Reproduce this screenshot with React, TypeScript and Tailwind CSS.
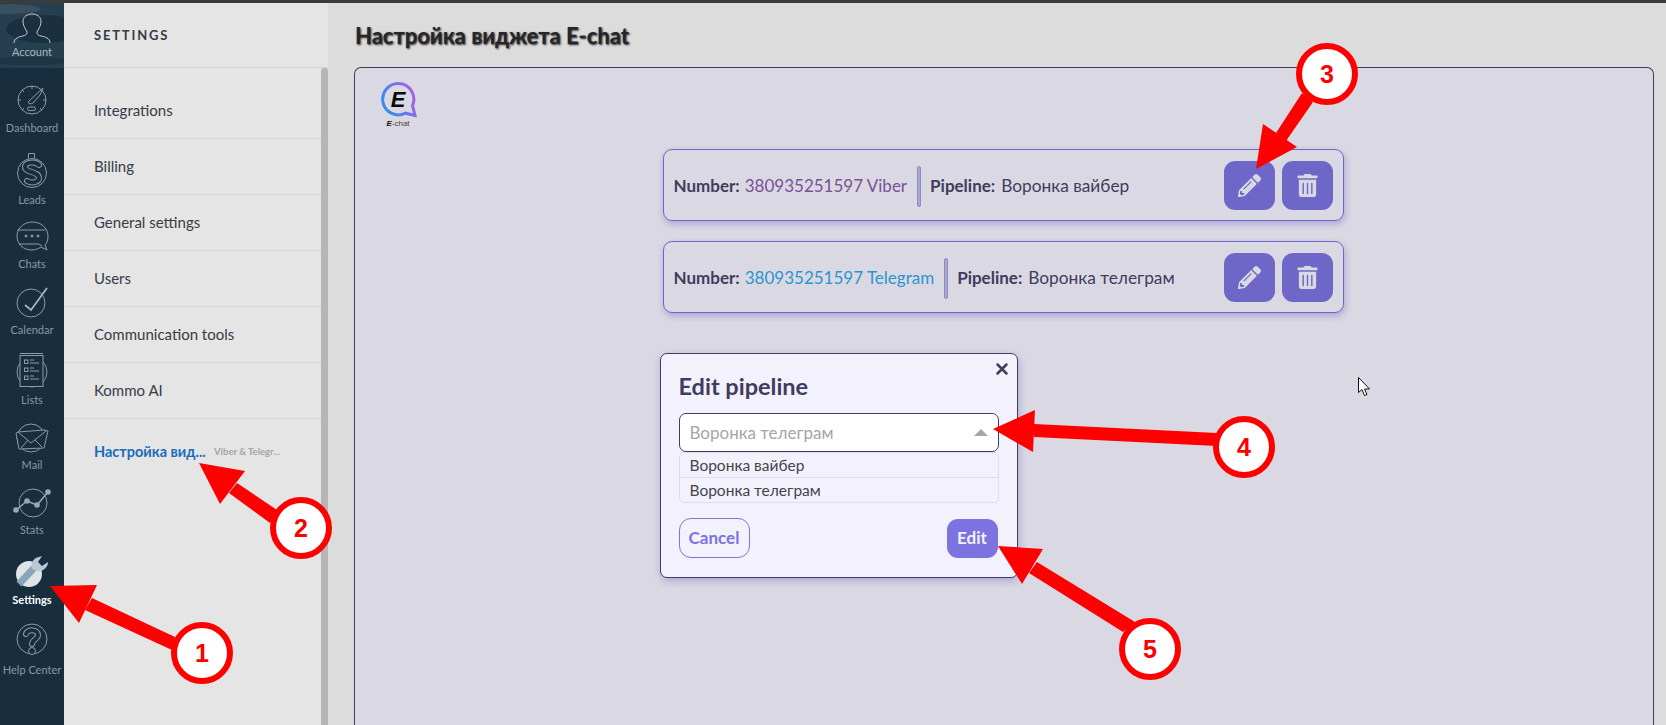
import { FaPencilAlt, FaTrashAlt } from "react-icons/fa";

function Hollow({ d }: { d: string }) {
  return (
    <>
      <path d={d} fill="none" stroke="#8d9ba5" strokeWidth="6" strokeLinecap="round" strokeLinejoin="round" />
      <path d={d} fill="none" stroke="#182d3e" strokeWidth="4" strokeLinecap="round" strokeLinejoin="round" />
    </>
  );
}

function Icon({ children }: { children: React.ReactNode }) {
  return (
    <svg width="44" height="40" viewBox="0 0 44 40" fill="none" stroke="#8d9ba5" strokeWidth="1">
      {children}
    </svg>
  );
}

const navItems = [
  {
    label: "Dashboard",
    height: "h-[68px]",
    icon: (
      <Icon>
        <circle cx="22" cy="20" r="14" />
        <path d="M22 6v3M8 20h3M33 20h3M12 30l2-2M32 30l-2-2M12 10l2 2" />
        <path d="M19 21l14-13-3 7-7 8c-3 2-6 0-4-2z" />
        <rect x="17.500" y="27" width="8" height="3.500" rx="1.700" />
      </Icon>
    ),
  },
  {
    label: "Leads",
    height: "h-[72px]",
    icon: (
      <Icon>
        <path d="M18.500 6.500V1.500h6v5" />
        <circle cx="22" cy="21" r="14.500" />
        <Hollow d="M29 13c-4-4-14-3-14 2 0 6 14 4 14 11 0 4-7 6-12 3" />
      </Icon>
    ),
  },
  {
    label: "Chats",
    height: "h-[64px]",
    icon: (
      <Icon>
        <path d="M31 31c-3 2-6 3-9 3C13 34 7 28 7 20S14 6 22.500 6 38 12 38 20c0 4-1 7-3 9l2 5-6-3z" />
        <path d="M7.500 14h28M9 28h20l3 2" />
        <circle cx="16" cy="20" r="1" fill="#8d9ba5" />
        <circle cx="22" cy="20" r="1" fill="#8d9ba5" />
        <circle cx="28" cy="20" r="1" fill="#8d9ba5" />
      </Icon>
    ),
  },
  {
    label: "Calendar",
    height: "h-[66px]",
    icon: (
      <Icon>
        <circle cx="21" cy="21" r="14" />
        <path d="M15 23l6 5 16-22" strokeWidth="1.800" stroke="#a9b5bd" />
      </Icon>
    ),
  },
  {
    label: "Lists",
    height: "h-[70px]",
    icon: (
      <Icon>
        <circle cx="22" cy="20" r="15" />
        <path d="M10 1.500h23" />
        <rect x="10" y="3.500" width="23" height="31" fill="#182d3e" />
        <rect x="14.500" y="8" width="3.500" height="3.500" />
        <rect x="14.500" y="16" width="3.500" height="3.500" />
        <rect x="14.500" y="24" width="3.500" height="3.500" />
        <path d="M20 8h4M20 11h9M20 16h4M20 19h9M20 24h4M20 27h9" />
      </Icon>
    ),
  },
  {
    label: "Mail",
    height: "h-[65px]",
    icon: (
      <Icon>
        <circle cx="21" cy="21" r="14" />
        <path d="M8 15l26-2 4 1-4 17-25 1-3-16z" fill="#182d3e" />
        <path d="M8 15l13 11 15-12M11 31l7-8M32 30l-7-7" />
      </Icon>
    ),
  },
  {
    label: "Stats",
    height: "h-[65px]",
    icon: (
      <Icon>
        <circle cx="23" cy="21" r="14" />
        <path d="M6 28l11-9 10 4 11-13" stroke="#9aa7b0" strokeWidth="1.500" />
        <circle cx="6" cy="28" r="2.800" fill="#9aa7b0" stroke="none" />
        <circle cx="17" cy="19" r="2.800" fill="#9aa7b0" stroke="none" />
        <circle cx="27" cy="23" r="2.800" fill="#9aa7b0" stroke="none" />
        <circle cx="38" cy="10" r="2.800" fill="#9aa7b0" stroke="none" />
      </Icon>
    ),
  },
  {
    label: "Settings",
    height: "h-[70px]",
    active: true,
    icon: (
      <svg width="44" height="40" viewBox="0 0 44 40" fill="none">
        <circle cx="19" cy="22" r="13" fill="#dfe4e7" />
        <path d="M9 32l15-16" stroke="#8aa5b8" strokeWidth="7" />
        <path d="M22 17c-2-5 1-11 7-12l3-1-4 6 4 4 6-4c0 6-6 10-11 9z" fill="#b9c8d2" />
      </svg>
    ),
  },
  {
    label: "Help Center",
    height: "h-[70px]",
    icon: (
      <Icon>
        <circle cx="22" cy="17" r="15" />
        <Hollow d="M16 12c1-5 12-5 12 1 0 4-6 5-6 9" />
        <circle cx="22" cy="29" r="3.500" fill="#182d3e" />
      </Icon>
    ),
  },
];

const settingsRows = [
  { label: "Integrations", height: "h-[71px] pt-[15px]" },
  { label: "Billing", height: "h-[56px]" },
  { label: "General settings", height: "h-[56px]" },
  { label: "Users", height: "h-[56px]" },
  { label: "Communication tools", height: "h-[56px]" },
  { label: "Kommo AI", height: "h-[56px]" },
];

function Sidebar() {
  return (
    <div className="w-[64px] shrink-0 bg-[#182d3e] flex flex-col">
      <div className="h-[65px] relative overflow-hidden bg-[#263f50] flex flex-col items-center justify-end pb-[8px]">
        <svg className="absolute inset-0" width="64" height="65" viewBox="0 0 64 65">
          <ellipse cx="44" cy="26" rx="38" ry="14" fill="#1a3040" />
          <ellipse cx="10" cy="6" rx="30" ry="5" fill="#3a5060" />
          <ellipse cx="30" cy="58" rx="44" ry="4" fill="#1e3545" />
        </svg>
        <svg className="relative" width="44" height="32" viewBox="0 0 44 32" fill="none" stroke="#c5cdd2" strokeWidth="1">
          <path d="M4 31c0-5 5-6 9-7 4-1 5-3 3-6-2-3-3-6-3-9 0-4 4-7 9-7s9 3 9 7c0 3-1 6-3 9-2 3-1 5 3 6 4 1 9 2 9 7" />
        </svg>
        <span className="relative text-[11px] leading-[16px] text-[#aab6bd]">Account</span>
      </div>
      {navItems.map((item) => (
        <div key={item.label} className={`${item.height} flex flex-col items-center justify-end`}>
          {item.icon}
          <span className={item.active ? "text-[11px] leading-[16px] font-bold text-white" : "text-[11px] leading-[16px] text-[#8799a5] whitespace-nowrap"}>
            {item.label}
          </span>
        </div>
      ))}
    </div>
  );
}

function SettingsPanel() {
  return (
    <div className="w-[264px] shrink-0 bg-[#e5e5e5] flex flex-col">
      <div className="h-[65px] shrink-0 border-b border-[#d4d4d4] flex items-center pl-[30px] pt-[2px] text-[13px] font-bold tracking-[0.14em] text-[#363a45]">
        SETTINGS
      </div>
      <div className="flex flex-1">
        <div className="flex-1">
          {settingsRows.map((row) => (
            <div key={row.label} className={`${row.height} border-b border-[#d4d4d4] flex items-center pl-[30px] text-[15px] text-[#363c48]`}>
              {row.label}
            </div>
          ))}
          <div className="h-[66px] flex items-center pl-[30px] whitespace-nowrap">
            <span className="w-[120px] text-[14.5px] font-bold text-[#1a6cbb]">Настройка вид...</span>
            <span className="text-[9.5px] font-bold text-[#a6a6a6]">Viber &amp; Telegr...</span>
          </div>
        </div>
        <div className="w-[7px] bg-[#b6b6b6] rounded-t-[3px]" />
      </div>
    </div>
  );
}

function ChannelRow({ number, numberColor, pipeline }: { number: string; numberColor: string; pipeline: string }) {
  return (
    <div className="w-[681px] h-[72px] shrink-0 rounded-[9px] border border-[#6e67c8] shadow-[1px_3px_7px_rgba(110,103,200,0.45)] flex items-center pl-[10px] pr-[10px] text-[17px] text-[#403c5e]">
      <div className="flex items-center pt-[2px]">
        <b>Number:</b>
        <span className={`ml-[5px] ${numberColor}`}>{number}</span>
        <div className="ml-[10px] mr-[9px] w-[4px] h-[41px] rounded-[2px] border border-[#8f8cc2] bg-[#aaa7d6]" />
        <b>Pipeline:</b>
        <span className="ml-[6px] text-[17.3px]">{pipeline}</span>
      </div>
      <div className="ml-auto flex gap-[7px]">
        <button className="w-[51px] h-[49px] rounded-[11px] bg-[#6f67c7] text-[#dad9e3] flex items-center justify-center">
          <FaPencilAlt size={23} />
        </button>
        <button className="w-[51px] h-[49px] rounded-[11px] bg-[#6f67c7] text-[#dad9e3] flex items-center justify-center">
          <FaTrashAlt size={23} />
        </button>
      </div>
    </div>
  );
}

function EditModal() {
  return (
    <div className="relative mt-[40px] -ml-[3px] w-[358px] h-[225px] shrink-0 rounded-[7px] border border-[#403c60] bg-[#f3f2fc] shadow-[1px_3px_8px_rgba(110,103,200,0.45)] px-[18px] text-[#403c5e]">
      <button className="absolute top-[5px] right-[7px] text-[#403c5e]">
        <svg width="16" height="20" viewBox="0 0 16 20" stroke="currentColor" strokeWidth="2.500" strokeLinecap="round">
          <path d="M3.500 5.500l9 9M12.500 5.500l-9 9" />
        </svg>
      </button>
      <h2 className="mt-[16px] text-[23.500px] leading-[32px] font-bold">Edit pipeline</h2>
      <div className="mt-[11px] w-[320px] h-[39px] rounded-[7px] border border-[#403c60] bg-white flex items-center pl-[10px] pr-[10px] text-[17px] text-[#a6a6a6]">
        Воронка телеграм
        <div className="ml-auto w-0 h-0 border-x-[7px] border-x-transparent border-b-[7px] border-b-[#a6a6a6]" />
      </div>
      <div className="w-[320px] rounded-[5px] border border-[#dfdcf0] text-[15.5px] text-[#45434f]">
        <div className="h-[25px] pl-[10px] leading-[25px] border-b border-[#dfdcf0]">Воронка вайбер</div>
        <div className="h-[24px] pl-[10px] leading-[24px]">Воронка телеграм</div>
      </div>
      <div className="mt-[15px] w-[319px] flex items-center justify-between">
        <button className="w-[71px] h-[40px] rounded-[12px] border border-[#7c72e0] text-[17px] font-bold text-[#7c72e0]">Cancel</button>
        <button className="w-[51px] h-[39px] rounded-[11px] bg-[#7c72e0] text-[17px] font-bold text-[#f3f2fc]">Edit</button>
      </div>
    </div>
  );
}

function Logo() {
  return (
    <svg className="self-start ml-[26px] mt-[14px] shrink-0" width="36" height="47" viewBox="0 0 36 47" fill="none">
      <defs>
        <linearGradient id="echat" x1="0" y1="0.8" x2="1" y2="0.2">
          <stop offset="0" stopColor="#2b90f2" />
          <stop offset="1" stopColor="#b05be8" />
        </linearGradient>
      </defs>
      <path d="M17.500 1.500a15.700 15.700 0 1 0 7 29.700l9.500 2.300-2.500-10a15.700 15.700 0 0 0-14-22z" stroke="url(#echat)" strokeWidth="3" />
      <text x="17" y="25" textAnchor="middle" fontSize="22" fontWeight="900" fontStyle="italic" fill="#0a0a0a" fontFamily="'Liberation Sans', sans-serif">E</text>
      <text x="17" y="44" textAnchor="middle" fontSize="8" fill="#444" fontFamily="'Liberation Sans', sans-serif">
        <tspan fontWeight="900" fontStyle="italic" fill="#111">E</tspan>-chat
      </text>
    </svg>
  );
}

function Annotation({ shaft, head, cx, cy, n }: { shaft: string; head: string; cx: number; cy: number; n: string }) {
  return (
    <g>
      <polygon points={shaft} fill="#ff0000" />
      <polygon points={head} fill="#ff0000" />
      <circle cx={cx} cy={cy} r="28" fill="#ffffff" stroke="#ff0000" strokeWidth="6" />
      <text x={cx} y={cy + 9} textAnchor="middle" fontSize="25" fontWeight="700" fill="#ff0000" fontFamily="'Liberation Sans', sans-serif">{n}</text>
    </g>
  );
}

export default function App() {
  return (
    <div className="relative w-[1666px] h-[725px] overflow-hidden flex flex-col bg-[#dcdcdc] font-['Lato',sans-serif]">
      <div className="h-[3px] shrink-0 bg-[#3c3c3c]" />
      <div className="flex flex-1 min-h-0">
        <Sidebar />
        <SettingsPanel />
        <div className="flex-1 min-w-0 flex flex-col pl-[26px] pr-[12px]">
          <h1 className="h-[64px] shrink-0 pl-[1px] flex items-center text-[22px] font-bold text-[#23262c] [text-shadow:1px_1px_2px_#222]">
            Настройка виджета E-chat
          </h1>
          <div className="flex-1 rounded-t-[7px] border border-b-0 border-[#403c60] bg-[#dad9e3] flex flex-col items-center">
            <Logo />
            <div className="mt-[20px] mr-[2px] flex flex-col items-start">
              <div className="flex flex-col gap-[20px]">
                <ChannelRow number="380935251597 Viber" numberColor="text-[#7a5096]" pipeline="Воронка вайбер" />
                <ChannelRow number="380935251597 Telegram" numberColor="text-[#2a96cf]" pipeline="Воронка телеграм" />
              </div>
              <EditModal />
            </div>
          </div>
        </div>
      </div>
      {/* annotations drawn on top of the screenshot */}
      <svg className="absolute inset-0 pointer-events-none" width="1666" height="725" viewBox="0 0 1666 725">
        <Annotation n="1" cx={202} cy={653} shaft="92,598 85,610 172,650 175,637" head="50,586 97,585 79,623" />
        <Annotation n="2" cx={301} cy={528} shaft="237,483 229,493 270,523 277,510" head="199,463 245,471 220,504" />
        <Annotation n="3" cx={1327} cy={74} shaft="1276,133 1286,141 1313,102 1302,93" head="1256,169 1263,124 1297,147" />
        <Annotation n="4" cx={1244} cy={447} shaft="1034,424 1034,437 1217,446 1217,433" head="993,429 1035,410 1033,452" />
        <Annotation n="5" cx={1150} cy={649} shaft="1037,562 1029,573 1123,632 1135,622" head="998,546 1043,549 1022,584" />
        <path d="M1358.500 377.500v15l3.500-3 2.500 6 2.500-1-2.500-5.500h5z" fill="#ffffff" stroke="#111" strokeWidth="1" />
      </svg>
    </div>
  );
}
